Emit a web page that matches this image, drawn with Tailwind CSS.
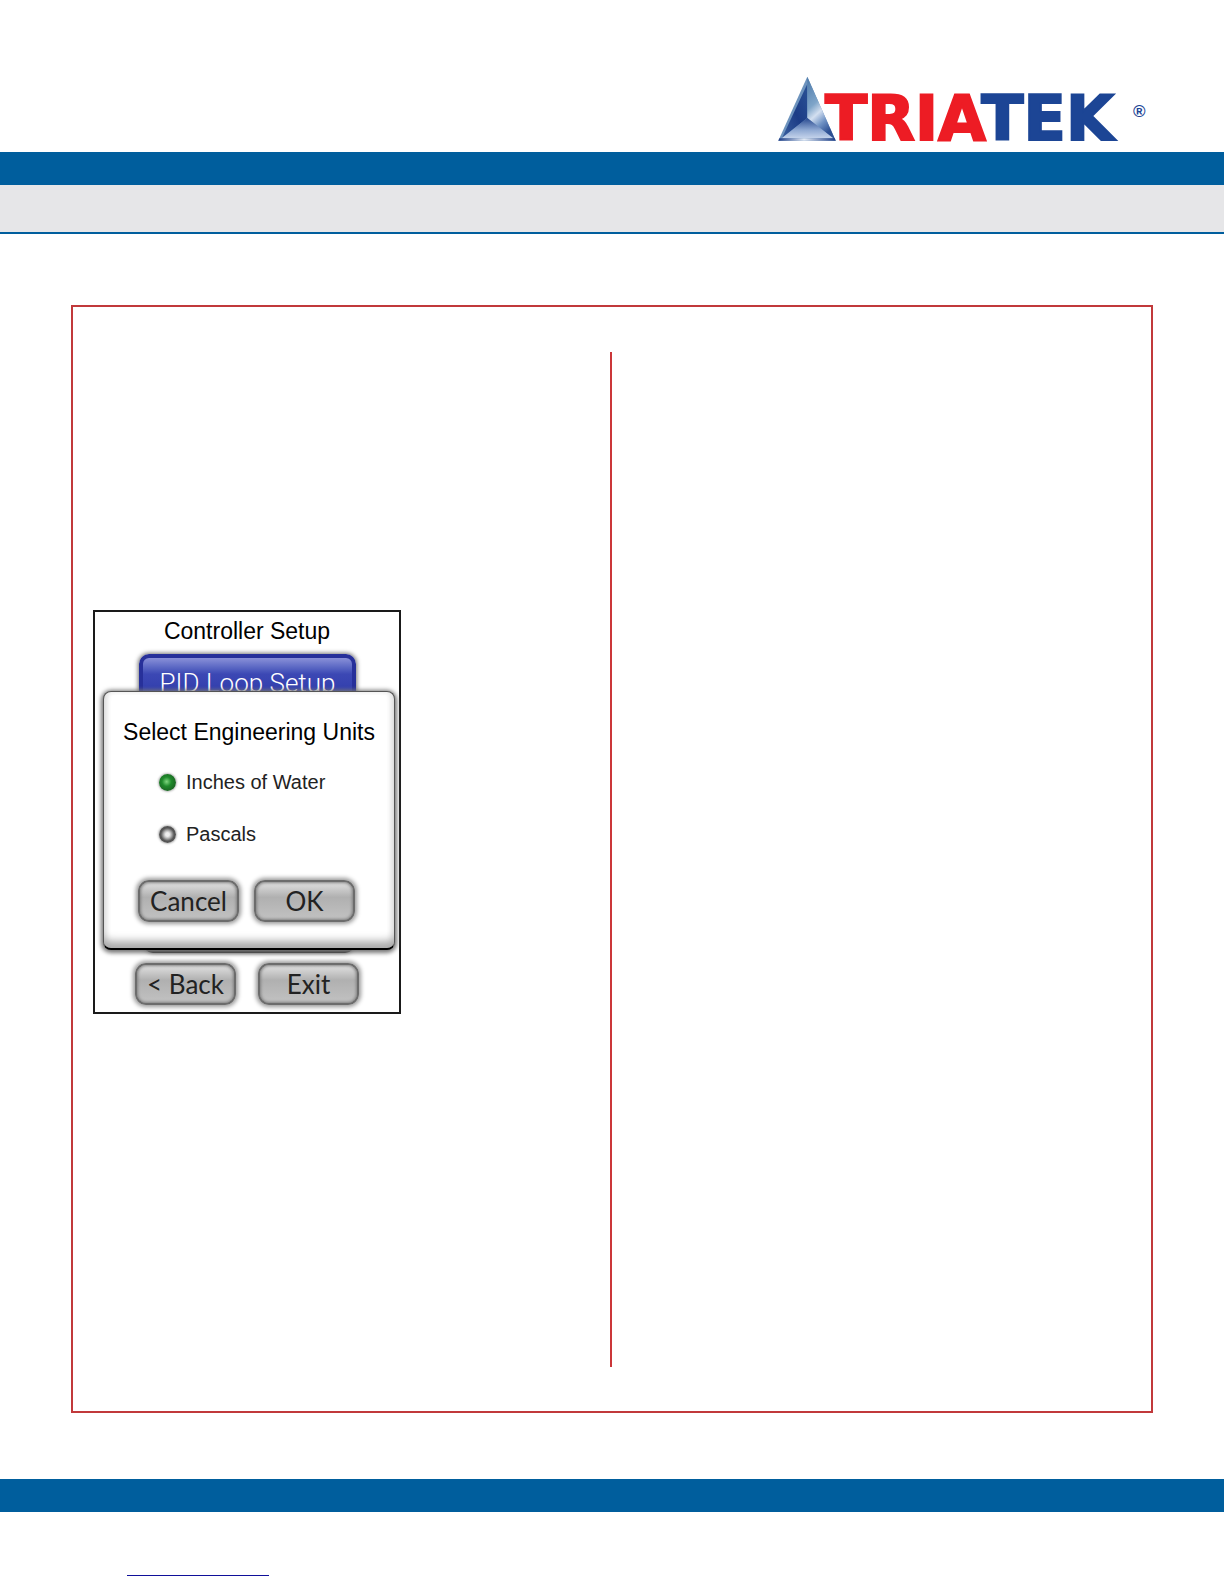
<!doctype html>
<html lang="en">
  <head>
    <meta charset="utf-8" />
    <meta name="viewport" content="width=device-width, initial-scale=1" />
    <title>Triatek - Controller Setup</title>
    <script src="https://cdn.jsdelivr.net/npm/@tailwindcss/browser@4"></script>
  </head>
  <body class="flex min-h-screen flex-col bg-white font-['Liberation_Sans',sans-serif] text-black">
    <header>
      <div class="flex h-[152px] items-end justify-end pr-[75px] pb-2">
        <svg class="h-[70px] w-[372px] overflow-visible" viewBox="0 0 372 70" role="img" aria-label="Triatek">
          <defs>
            <linearGradient id="faceLeft" x1="0" y1="1" x2="1" y2="0">
              <stop offset="0" stop-color="#3a5f9f" />
              <stop offset="0.5" stop-color="#1c3c86" />
              <stop offset="1" stop-color="#2a5296" />
            </linearGradient>
            <linearGradient id="faceRight" x1="0" y1="0" x2="0.4" y2="1">
              <stop offset="0" stop-color="#4a77a8" />
              <stop offset="0.45" stop-color="#7fa5c9" />
              <stop offset="0.62" stop-color="#d3dff0" />
              <stop offset="0.8" stop-color="#6f92c4" />
              <stop offset="1" stop-color="#2c4f93" />
            </linearGradient>
            <linearGradient id="faceBottom" x1="0" y1="0" x2="0" y2="1">
              <stop offset="0" stop-color="#27488f" />
              <stop offset="0.6" stop-color="#8fa9d3" />
              <stop offset="1" stop-color="#c3d2ea" />
            </linearGradient>
            <linearGradient id="base" x1="0" y1="0" x2="1" y2="0">
              <stop offset="0" stop-color="#1b3a84" />
              <stop offset="0.45" stop-color="#e4ebf6" />
              <stop offset="1" stop-color="#1b3a84" />
            </linearGradient>
          </defs>
          <text x="48" y="66" font-family="'DejaVu Sans', sans-serif" font-weight="700" font-size="62" stroke-width="2">
            <tspan fill="#ed1c24" stroke="#ed1c24">TRIA</tspan><tspan fill="#1c4595" stroke="#1c4595">TEK</tspan>
          </text>
          <text x="356" y="43" font-family="'Liberation Sans', sans-serif" font-weight="700" font-size="17" fill="#1c4595">®</text>
          <path d="M30.3 2.7 L1.3 66.7 H58.7 Z" fill="#6d93bd" />
          <path d="M30.3 10 L5 64 L30.3 44 Z" fill="url(#faceLeft)" />
          <path d="M30.3 2.7 V44 L58.7 66.7 Z" fill="url(#faceRight)" />
          <path d="M30.3 44 L5 64 H56 Z" fill="url(#faceBottom)" />
          <path d="M2.4 64.3 H57.6 L58.7 66.7 H1.3 Z" fill="url(#base)" />
        </svg>
      </div>
      <div class="h-[33px] bg-[#005e9d]"></div>
      <div class="h-[49px] border-b-2 border-[#005e9d] bg-[#e6e6e8]"></div>
    </header>

    <main class="mx-[71px] mt-[71px] grid flex-1 grid-cols-2 border-2 border-[#c1393b] pt-[45px] pb-11">
      <section class="border-r-2 border-[#cb3639] pt-[258px] pl-5">
        <!-- controller screen -->
        <div class="relative flex h-[404px] w-[308px] flex-col border-2 border-[#1a1a1a]">
          <h1 class="h-[38px] text-center text-[23px] leading-[38px]">Controller Setup</h1>
          <button
            class="mt-1 ml-11 h-[54px] w-[217px] rounded-[10px] border-4 border-[#27309a] bg-linear-to-b from-[#8a90d8] via-[#3c48b4] via-35% to-[#2b37a8] pt-1 font-[Roboto,sans-serif] text-[26px] leading-[42px] font-light whitespace-nowrap text-white shadow-[0_0_4px_1px_#777]"
          >
            PID Loop Setup
          </button>
          <div class="mt-auto mr-11 ml-12 h-10 rounded-[10px] bg-[#111] shadow-[0_0_4px_#555]"></div>
          <div class="mt-[10px] mb-[7px] flex gap-[22px] pl-10">
            <button
              class="h-[42px] w-[101px] rounded-[11px] border-2 border-[#6c6c6c] bg-linear-to-b from-[#e2e2e2] via-[#b0b0b0] via-40% to-[#c2c2c2] font-[Lato,sans-serif] text-[26px] leading-[38px] whitespace-nowrap text-[#222] shadow-[0_0_4px_2px_#999,inset_0_0_3px_1px_#808080]"
            >
              &lt; Back
            </button>
            <button
              class="h-[42px] w-[101px] rounded-[11px] border-2 border-[#6c6c6c] bg-linear-to-b from-[#e2e2e2] via-[#b0b0b0] via-40% to-[#c2c2c2] font-[Lato,sans-serif] text-[26px] leading-[38px] whitespace-nowrap text-[#222] shadow-[0_0_4px_2px_#999,inset_0_0_3px_1px_#808080]"
            >
              Exit
            </button>
          </div>

          <!-- units dialog, covers the setup menu -->
          <div
            role="dialog"
            aria-labelledby="units-title"
            class="absolute top-[79px] right-1 left-2 h-[259px] rounded-lg border border-b-2 border-[#555] border-b-black bg-white shadow-[0_1px_4px_2px_#777,inset_0_-10px_8px_-3px_#aaa,inset_-4px_0_4px_#eee,inset_4px_0_4px_#eee]"
          >
            <h2 id="units-title" class="mt-[22px] text-center text-[23px] leading-9 whitespace-nowrap">
              Select Engineering Units
            </h2>
            <div class="mt-[14px] ml-[55px] flex flex-col gap-4 text-[20px] leading-9 text-[#222]">
              <label class="flex items-center gap-[10px]">
                <input
                  type="radio"
                  name="units"
                  checked
                  class="size-[17px] appearance-none rounded-full bg-radial-[at_45%_45%] from-[#7fd67f] via-[#1f8a2b] via-35% to-[#17491b] shadow-[0_0_2px_1px_#bbb]"
                />
                Inches of Water
              </label>
              <label class="flex items-center gap-[10px]">
                <input
                  type="radio"
                  name="units"
                  class="size-[17px] appearance-none rounded-full bg-radial-[at_50%_50%] from-[#eee] from-15% via-[#bbb] via-30% to-[#555] to-55% shadow-[0_0_2px_1px_#bbb]"
                />
                Pascals
              </label>
            </div>
            <div class="mt-7 ml-[34px] flex gap-[15px]">
              <button
                class="h-[42px] w-[101px] rounded-[11px] border-2 border-[#6c6c6c] bg-linear-to-b from-[#e2e2e2] via-[#b0b0b0] via-40% to-[#c2c2c2] font-[Lato,sans-serif] text-[26px] leading-[38px] whitespace-nowrap text-[#222] shadow-[0_0_4px_2px_#999,inset_0_0_3px_1px_#808080]"
              >
                Cancel
              </button>
              <button
                class="h-[42px] w-[101px] rounded-[11px] border-2 border-[#6c6c6c] bg-linear-to-b from-[#e2e2e2] via-[#b0b0b0] via-40% to-[#c2c2c2] font-[Lato,sans-serif] text-[26px] leading-[38px] whitespace-nowrap text-[#222] shadow-[0_0_4px_2px_#999,inset_0_0_3px_1px_#808080]"
              >
                OK
              </button>
            </div>
          </div>
        </div>
      </section>
      <section></section>
    </main>

    <footer class="mt-[66px] h-[105px]">
      <div class="h-[33px] bg-[#005e9d]"></div>
      <a href="#" aria-label="Website" class="ml-[127px] block h-16 w-[142px] border-b border-[#10109a]"></a>
    </footer>
  </body>
</html>
